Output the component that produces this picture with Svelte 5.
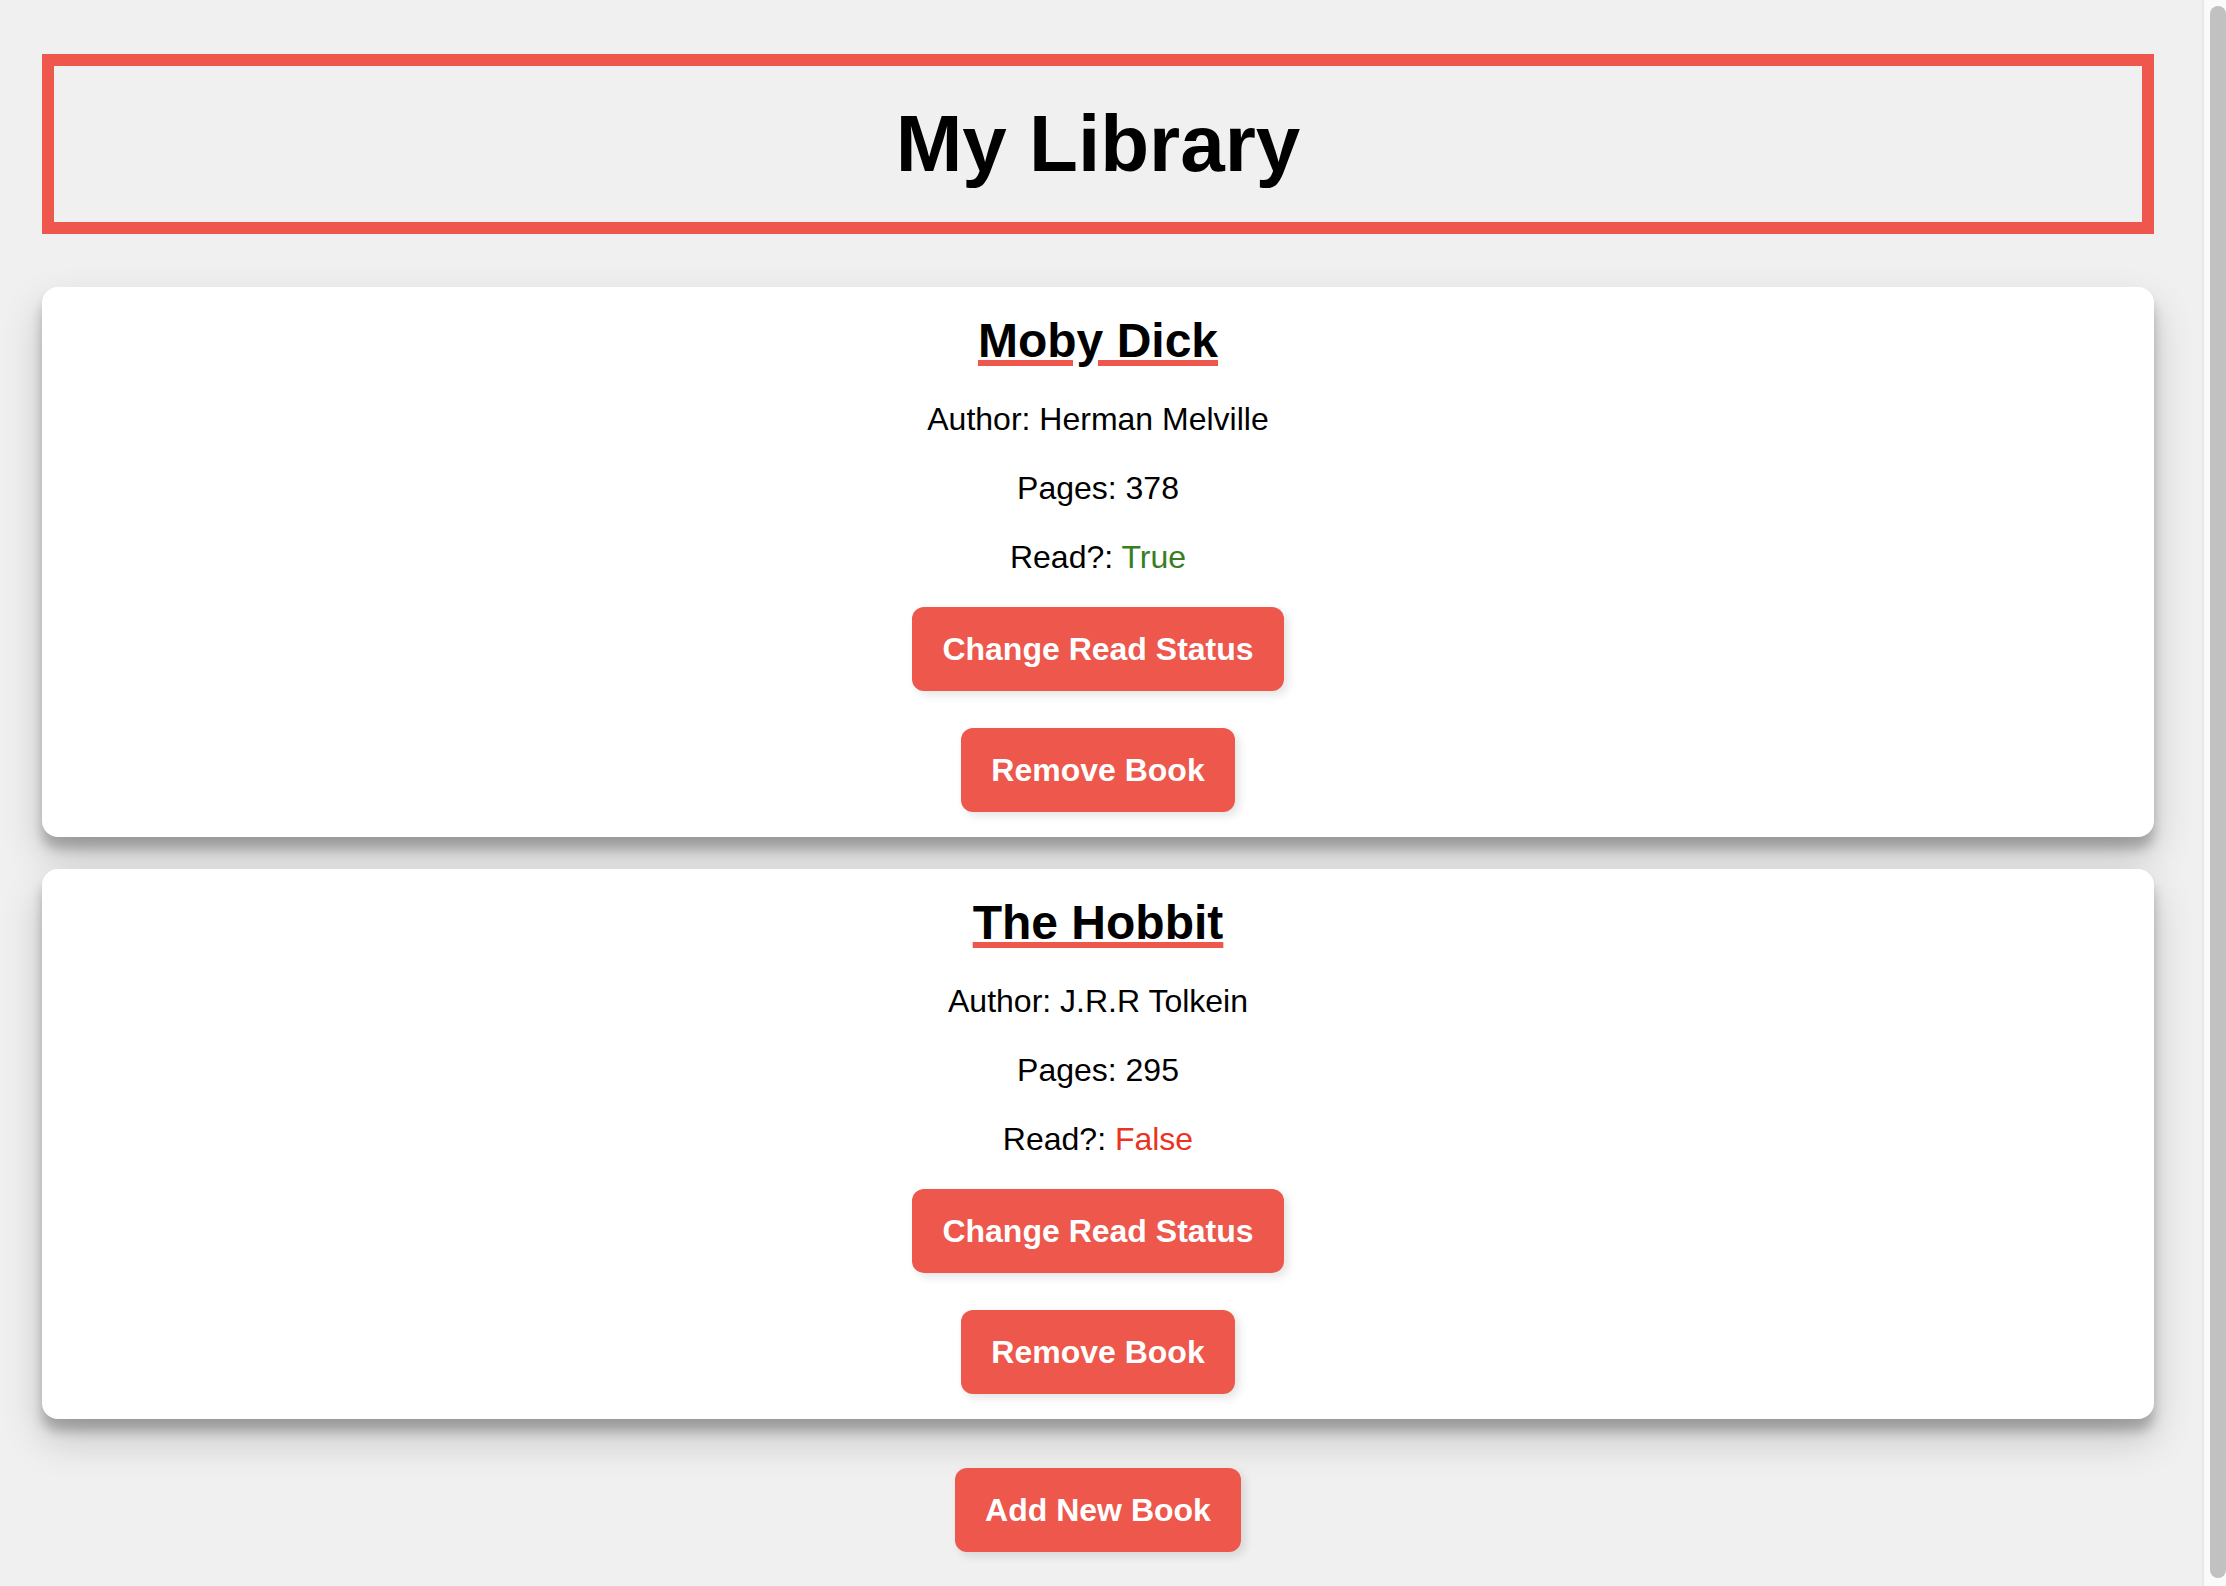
<script lang="ts">
  type Book = { title: string; author: string; pages: number; read: boolean };

  let books: Book[] = $state([
    { title: 'Moby Dick', author: 'Herman Melville', pages: 378, read: true },
    { title: 'The Hobbit', author: 'J.R.R Tolkein', pages: 295, read: false }
  ]);

  function toggleRead(book: Book) {
    book.read = !book.read;
  }

  function removeBook(index: number) {
    books.splice(index, 1);
  }

  function addBook() {
    books.push({ title: 'New Book', author: 'Unknown', pages: 0, read: false });
  }
</script>

<div class="page">
  <main class="content">
    <h1 class="heading">My Library</h1>

    <section class="books">
      {#each books as book, index}
        <article class="card">
          <h2 class="title">{book.title}</h2>
          <p class="line">Author: {book.author}</p>
          <p class="line">Pages: {book.pages}</p>
          <p class="line">
            Read?: <span class:yes={book.read} class:no={!book.read}>{book.read ? 'True' : 'False'}</span>
          </p>
          <div class="actions">
            <button type="button" class="button" onclick={() => toggleRead(book)}>Change Read Status</button>
            <button type="button" class="button" onclick={() => removeBook(index)}>Remove Book</button>
          </div>
        </article>
      {/each}
    </section>

    <button type="button" class="button" onclick={addBook}>Add New Book</button>
  </main>

  <div class="track" aria-hidden="true">
    <div class="thumb"></div>
  </div>
</div>

<style>
  :global(body) {
    background: #f0f0f0;
  }

  .page {
    --accent: #ed574c;
    display: flex;
    min-height: 100vh;
    color: #000;
    font-family: Helvetica, 'Liberation Sans', Arial, sans-serif;
    font-size: 32px;
  }

  .content {
    flex: 1;
    display: flex;
    flex-direction: column;
    align-items: center;
    padding: 54px 48px 32px 42px;
  }

  .heading {
    box-sizing: border-box;
    width: 100%;
    margin: 0 0 53px;
    padding: 32px;
    border: 12px solid var(--accent);
    font-size: 80px;
    line-height: 92px;
    text-align: center;
  }

  .books {
    display: flex;
    flex-direction: column;
    gap: 32px;
    width: 100%;
    margin-bottom: 49px;
  }

  .card {
    display: flex;
    flex-direction: column;
    align-items: center;
    gap: 31px;
    padding: 26px 25px 25px;
    border-radius: 16px;
    background: #fff;
    box-shadow:
      0 20px 40px rgba(0, 0, 0, 0.19),
      0 12px 12px rgba(0, 0, 0, 0.23);
    text-align: center;
  }

  .title {
    margin: 0;
    font-size: 48px;
    line-height: 56px;
    text-decoration: underline;
    text-decoration-color: var(--accent);
    text-decoration-thickness: 6px;
    text-underline-offset: 3px;
  }

  .line {
    margin: 0;
    line-height: 38px;
  }

  .yes {
    color: #377e22;
  }

  .no {
    color: #ea3323;
  }

  .actions {
    display: flex;
    flex-direction: column;
    align-items: center;
    gap: 37px;
  }

  .button {
    padding: 24px 30px;
    border: 0;
    border-radius: 12px;
    background: var(--accent);
    box-shadow: 4px 4px 10px rgba(0, 0, 0, 0.11);
    color: #fff;
    font-family: Arial, 'Liberation Sans', sans-serif;
    font-size: 32px;
    font-weight: 700;
    line-height: 36px;
    cursor: pointer;
  }

  .track {
    box-sizing: border-box;
    display: flex;
    width: 24px;
    padding: 6px 0 8px 6px;
    border-left: 2px solid #e8e8e8;
    background: #fafafa;
  }

  .thumb {
    flex: 1;
    border-radius: 8px;
    background: #c1c1c1;
  }
</style>
